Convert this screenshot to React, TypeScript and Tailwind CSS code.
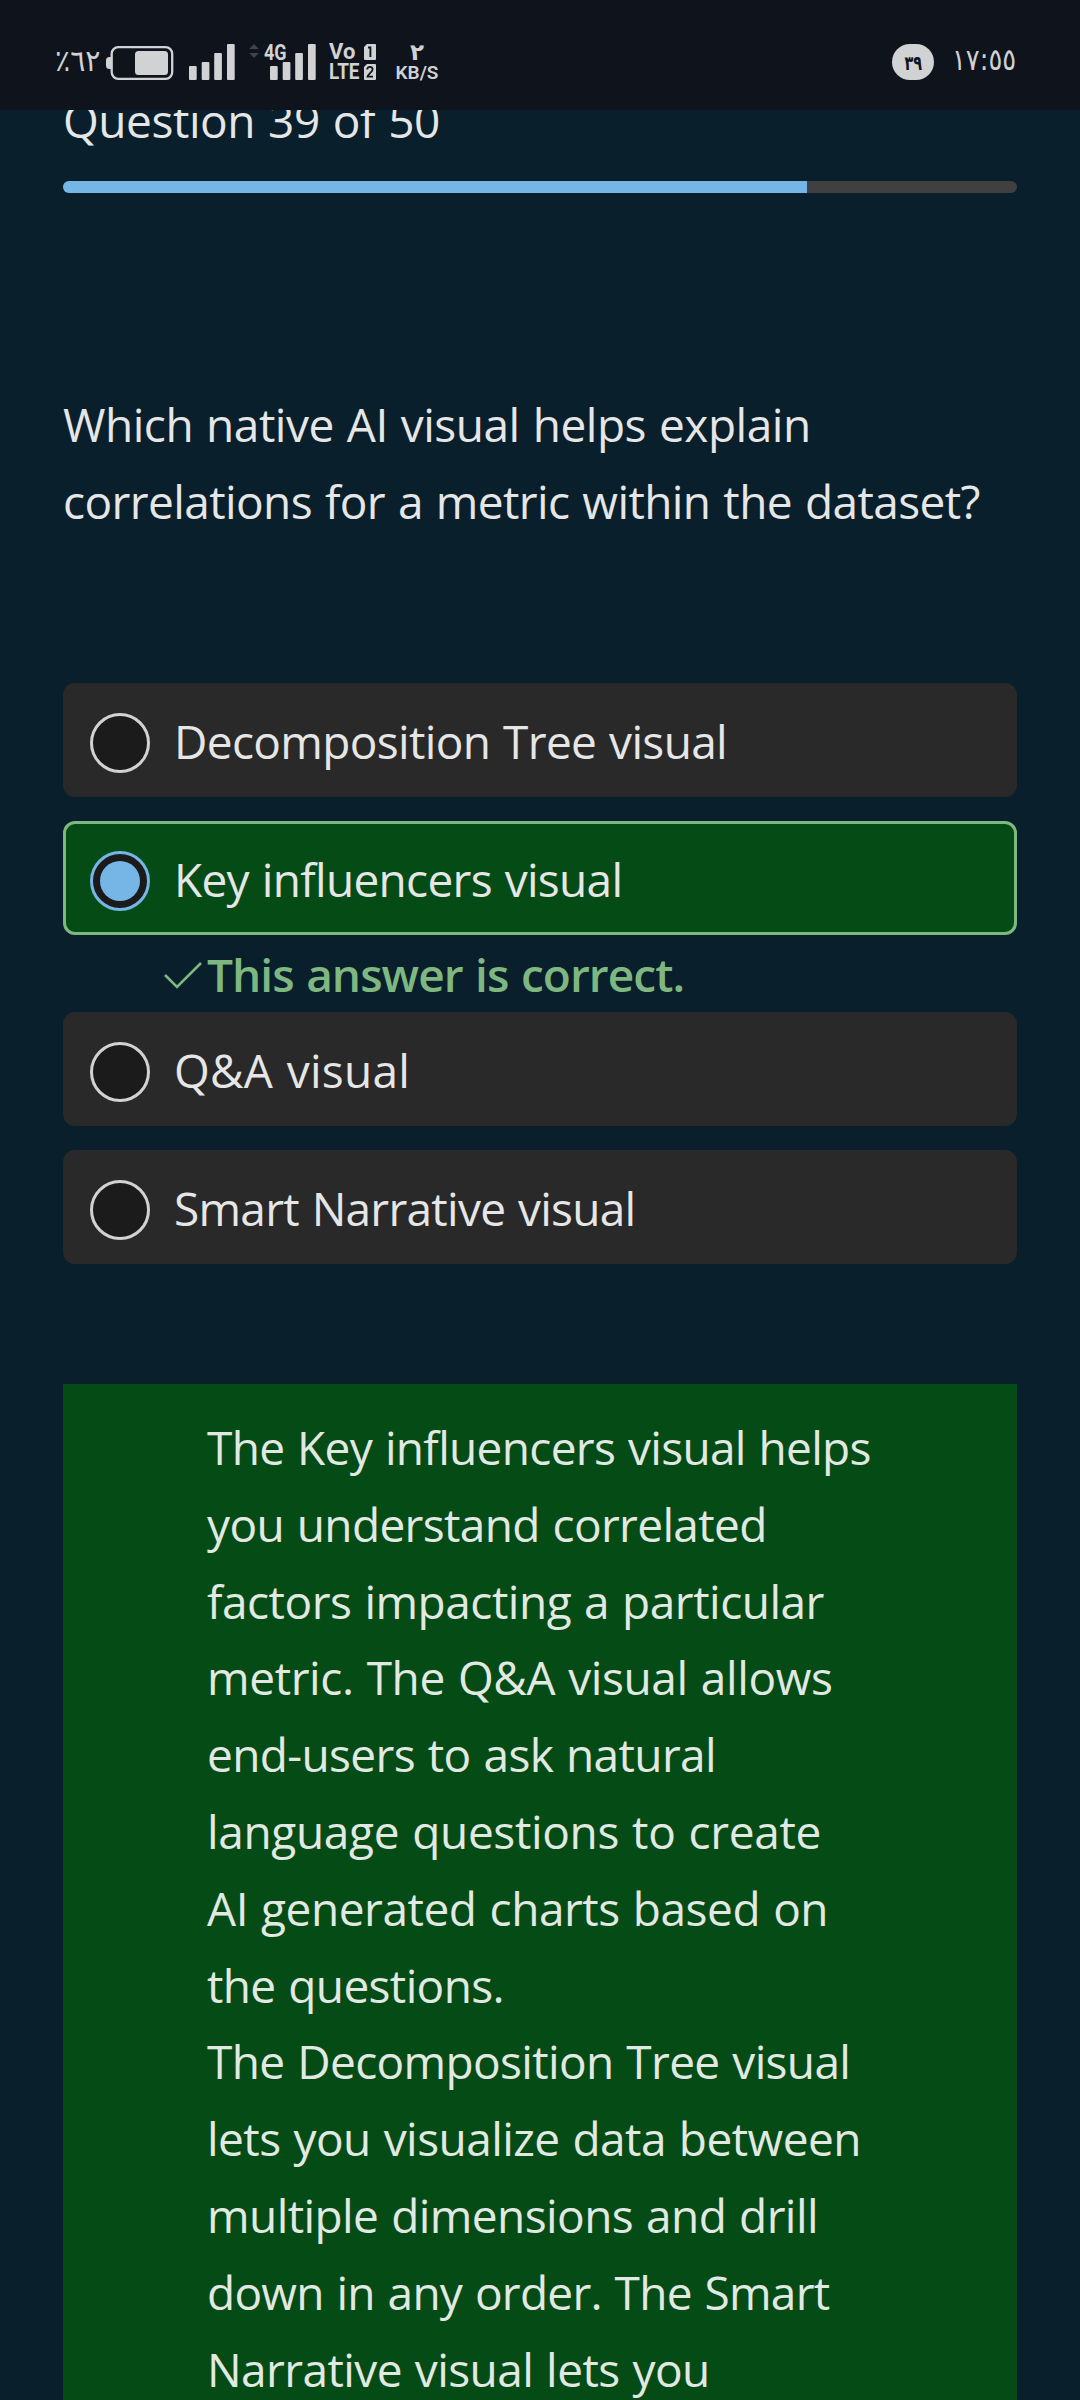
import type { ReactNode } from "react";

function Battery() {
  return (
    <svg className="h-9 w-[68px] shrink-0" viewBox="0 0 68 36" fill="none">
      <path d="M5 13v12H3.5A3.5 3.5 0 0 1 0 21.500v-5A3.500 3.500 0 0 1 3.500 13z" fill="#d0d2d4" />
      <rect x="5.700" y="3.200" width="60.500" height="31.600" rx="6.500" stroke="#d0d2d4" strokeWidth="2.300" />
      <rect x="29" y="7" width="33" height="24" rx="3.500" fill="#d0d2d4" />
    </svg>
  );
}

function SignalBars() {
  return (
    <svg className="h-9 w-[46px] shrink-0" viewBox="0 0 46 36" fill="#d0d2d4">
      <rect x="0" y="22" width="7.700" height="14" rx="1" />
      <rect x="12.700" y="18" width="7.700" height="18" rx="1" />
      <rect x="25.200" y="9" width="7.700" height="27" rx="1" />
      <rect x="38" y="0" width="7.700" height="36" rx="1" />
    </svg>
  );
}

function StatusBar() {
  return (
    <header className="flex h-[110px] shrink-0 items-start bg-[#0f141c] pt-11 pr-[66px] pl-[55px] text-[#d0d2d4]">
      <div className="h-9 w-[51px] shrink-0 origin-left scale-x-[0.94] font-['DejaVu_Sans',sans-serif] text-[30px] leading-[34px] tracking-[-2.7px] whitespace-nowrap [direction:ltr] [unicode-bidi:bidi-override]">
        ٪٦٢
      </div>
      <Battery />
      <div className="ml-[15px]">
        <SignalBars />
      </div>

      <div className="relative ml-3.5 flex h-9 w-[67px] shrink-0 justify-end">
        <svg className="absolute top-0 left-0 h-3.5 w-[10px]" viewBox="0 0 10 14" fill="#41444a">
          <path d="M5 0l4.700 5H.3zM5 14L.3 9h9.400z" />
        </svg>
        <span className="absolute -top-[2px] left-[15px] origin-left scale-x-[0.8] font-['Roboto',sans-serif] text-[22.5px] leading-[20px] font-bold">
          4G
        </span>
        <SignalBars />
      </div>

      <div className="ml-[13px] flex h-9 w-[47px] shrink-0 flex-col justify-between font-['Roboto',sans-serif] text-[22px] font-bold">
        <div className="flex h-4 items-center justify-between">
          <span className="leading-4">Vo</span>
          <svg className="h-4 w-[13px] shrink-0" viewBox="0 0 13 16">
            <path d="M4 0h8a1 1 0 0 1 1 1v14a1 1 0 0 1-1 1H2a1 1 0 0 1-1-1V3z" fill="#d0d2d4" />
            <path d="M5 3.500h2.400V13" fill="none" stroke="#0f141c" strokeWidth="1.900" />
          </svg>
        </div>
        <div className="flex h-4 items-center justify-between">
          <span className="w-[33px] origin-left scale-x-[0.86] leading-4">LTE</span>
          <svg className="h-4 w-[13px] shrink-0" viewBox="0 0 13 16">
            <path d="M4 0h8a1 1 0 0 1 1 1v14a1 1 0 0 1-1 1H2a1 1 0 0 1-1-1V3z" fill="#d0d2d4" />
            <path d="M4.200 5.500C4.200 2 9.800 2 9.600 5.500 9.500 8 4.500 10.500 4.400 12.700H10" fill="none" stroke="#0f141c" strokeWidth="1.800" />
          </svg>
        </div>
      </div>

      <div className="ml-[19px] flex h-9 w-11 shrink-0 flex-col items-center">
        <span className="h-[19px] font-['DejaVu_Sans',sans-serif] text-[23px] leading-[17px] font-bold">٢</span>
        <span className="font-['Roboto',sans-serif] text-[19px] leading-[23px] font-semibold">KB/S</span>
      </div>

      <div className="ml-auto flex h-9 w-[42px] shrink-0 items-center justify-center rounded-[18px] bg-[#d0d2d4] font-['DejaVu_Sans',sans-serif] text-[20px] leading-9 font-bold text-[#0f141c]">
        <span className="scale-x-[0.72] pt-px">٣٩</span>
      </div>
      <div className="ml-[18px] h-9 w-[62px] shrink-0 origin-left scale-x-[0.86] font-['DejaVu_Sans',sans-serif] text-[30px] leading-[31px] tracking-[-4px] whitespace-nowrap [direction:ltr] [unicode-bidi:bidi-override]">
        ١٧:٥٥
      </div>
    </header>
  );
}

function Line({ className, children }: { className: string; children: ReactNode }) {
  return <span className={"block whitespace-nowrap " + className}>{children}</span>;
}

function Option({ label, tracking, selected = false }: { label: string; tracking: string; selected?: boolean }) {
  return (
    <label
      className={
        "flex h-[114px] items-start rounded-xl border-[3px] pl-6 " +
        (selected ? "border-[#7fb780] bg-[#054b16]" : "border-[#292929] bg-[#292929]")
      }
    >
      <span
        className={
          "mt-[27px] flex size-[60px] shrink-0 items-center justify-center rounded-full border-[3px] bg-[#1b1b1b] " +
          (selected ? "border-[#75b6e7]" : "border-[#d2d2d2]")
        }
      >
        {selected && <span className="size-10 rounded-full bg-[#75b6e7]" />}
      </span>
      <span className={"mt-[17px] ml-6 whitespace-nowrap " + tracking}>{label}</span>
    </label>
  );
}

export default function App() {
  return (
    <div className="flex h-[2400px] w-[1080px] flex-col overflow-hidden bg-[#091f2b]">
      <StatusBar />
      <main className="min-h-0 flex-1 overflow-hidden px-[63px] font-['Open_Sans',sans-serif] text-[46px] leading-[76.8px] text-[#e6e6e6] [word-spacing:1.5px]">
        <div className="-mt-7 h-[77px] tracking-[-0.44px]">Question 39 of 50</div>
        <div className="mt-[22px] h-3 overflow-hidden rounded-full bg-[#404040]">
          <div className="h-full w-[78%] bg-[#75b6e7]" />
        </div>

        <h1 className="mt-[193px] h-[154px]">
          <Line className="tracking-[-0.48px]">Which native AI visual helps explain</Line>
          <Line className="tracking-[-0.59px]">correlations for a metric within the dataset?</Line>
        </h1>

        <div className="mt-[143px] flex flex-col">
          <Option label="Decomposition Tree visual" tracking="tracking-[-0.65px]" />
          <div className="mt-6">
            <Option label="Key influencers visual" tracking="tracking-[-0.69px]" selected />
          </div>
          <div className="flex h-[77px] items-start pl-[101px] font-semibold text-[#7fb780]">
            <svg className="mt-[26px] h-7 w-[43px] shrink-0" viewBox="0 0 43 28" fill="none">
              <path d="M1 14l12 12L37 2" stroke="#7fb780" strokeWidth="2.600" />
            </svg>
            <span className="mt-px whitespace-nowrap tracking-[-0.95px]">This answer is correct.</span>
          </div>
          <Option label="Q&A visual" tracking="tracking-[0.23px]" />
          <div className="mt-6">
            <Option label="Smart Narrative visual" tracking="tracking-[-0.73px]" />
          </div>
        </div>

        <section className="mt-[120px] h-[1100px] bg-[#054b16] pt-[25px] pl-36 text-[#e2e9e3]">
          <p>
            <Line className="tracking-[-0.68px]">The Key influencers visual helps</Line>
            <Line className="tracking-[-0.65px]">you understand correlated</Line>
            <Line className="tracking-[-0.49px]">factors impacting a particular</Line>
            <Line className="tracking-[-0.39px]">metric. The Q&amp;A visual allows</Line>
            <Line className="tracking-[-0.63px]">end-users to ask natural</Line>
            <Line className="tracking-[-0.35px]">language questions to create</Line>
            <Line className="tracking-[-0.45px]">AI generated charts based on</Line>
            <Line className="tracking-[-0.64px]">the questions.</Line>
          </p>
          <p>
            <Line className="tracking-[-0.65px]">The Decomposition Tree visual</Line>
            <Line className="tracking-[-0.55px]">lets you visualize data between</Line>
            <Line className="tracking-[-0.58px]">multiple dimensions and drill</Line>
            <Line className="tracking-[-0.73px]">down in any order. The Smart</Line>
            <Line className="tracking-[-0.58px]">Narrative visual lets you</Line>
          </p>
        </section>
      </main>
    </div>
  );
}
